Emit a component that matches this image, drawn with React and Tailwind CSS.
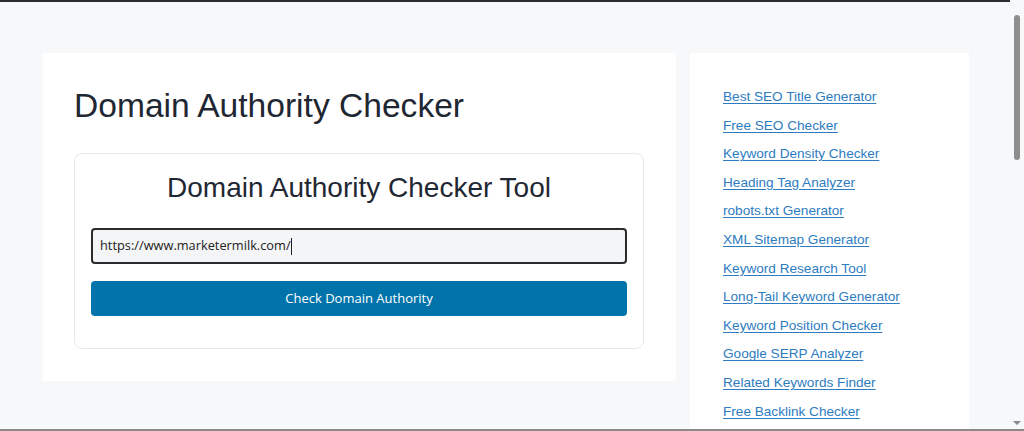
const TOOLS = [
  'Best SEO Title Generator',
  'Free SEO Checker',
  'Keyword Density Checker',
  'Heading Tag Analyzer',
  'robots.txt Generator',
  'XML Sitemap Generator',
  'Keyword Research Tool',
  'Long-Tail Keyword Generator',
  'Keyword Position Checker',
  'Google SERP Analyzer',
  'Related Keywords Finder',
  'Free Backlink Checker',
]

const ARIAL = { fontFamily: '"Liberation Sans", Arial, sans-serif' }
const UI = { fontFamily: '"Open Sans", "Noto Sans", sans-serif' }

function CheckerCard() {
  return (
    <div className="w-[633px] h-[328px] bg-white px-[31px] pt-[33px]">
      <h1 className="text-[33.6px] leading-[40px] text-[#1f2733]" style={ARIAL}>
        Domain Authority Checker
      </h1>

      {/* tool box */}
      <div className="mt-[27px] w-[570px] h-[196px] border border-[#e6e8ec] rounded-lg px-[16px] pt-[17px]">
        <h2 className="text-center text-[28px] leading-[33px] text-[#1f2733]" style={ARIAL}>
          Domain Authority Checker Tool
        </h2>
        <div
          className="mt-[24px] h-[36px] flex items-center px-[7px] border-2 border-[#2b2b2b] rounded bg-[#f4f5f6] text-[12.8px] text-[#222]"
          style={UI}
        >
          https://www.marketermilk.com/
          <span className="inline-block w-px h-[17px] bg-[#222]" />
        </div>
        <button
          className="mt-[17px] w-full h-[35px] rounded bg-[#0073aa] text-white text-[13px]"
          style={UI}
        >
          Check Domain Authority
        </button>
      </div>
    </div>
  )
}

function ToolLinks() {
  return (
    <div className="w-[279px] self-stretch bg-white pl-[33px] pt-[28px]">
      <ul>
        {TOOLS.map(t => (
          <li key={t} className="h-[28.6px] leading-[28.6px]">
            <a href="#" className="text-[13.6px] text-[#2e7cbf] underline underline-offset-2" style={ARIAL}>
              {t}
            </a>
          </li>
        ))}
      </ul>
    </div>
  )
}

export default function App() {
  return (
    <div className="w-[1024px] h-[431px] overflow-hidden flex flex-col bg-[#f7f8fa]">
      <div className="flex flex-1 min-h-0">
        <div className="flex-1 flex flex-col">
          <div className="h-[2px] bg-[#2d2d2d]" />
          <div className="flex-1 min-h-0 flex items-start gap-[14px] pl-[43px] pt-[51px]">
            <CheckerCard />
            <ToolLinks />
          </div>
        </div>

        {/* scrollbar */}
        <div className="w-[14px] flex flex-col items-center pt-[15px] pb-[4px]">
          <div className="w-[6px] h-[145px] rounded-full bg-[#8e8e8e]" />
          <div className="flex-1" />
          <div className="w-0 h-0 border-l-[4px] border-r-[4px] border-t-[4px] border-l-transparent border-r-transparent border-t-[#8a8a8a]" />
        </div>
      </div>
      <div className="h-[2px] bg-[#8a8a8a]" />
    </div>
  )
}
